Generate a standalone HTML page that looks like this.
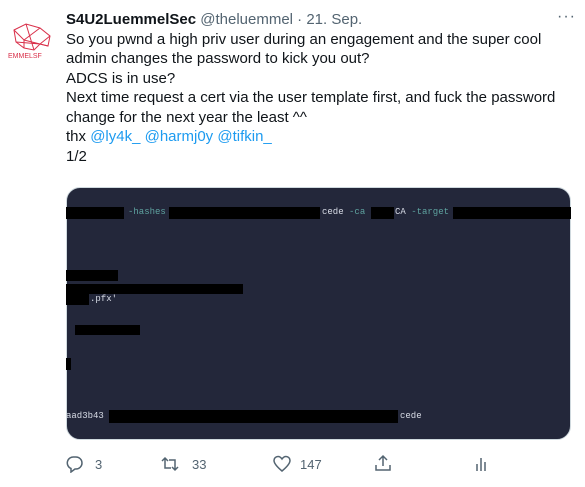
<!DOCTYPE html>
<html><head><style>
body{margin:0;width:585px;height:487px;background:#fff;font-family:"Liberation Sans",sans-serif;color:#0f1419;position:relative;overflow:hidden}
.a{position:absolute}
.t{font-size:15px;line-height:19.5px;left:66px;top:10px;width:510px}
.b{background:#000;position:absolute}
.m{font-family:"Liberation Mono",monospace;font-size:9px;position:absolute;color:#d8dce6}
.g{color:#5fa3a0}
.ic{position:absolute;top:457px;color:#536471;font-size:13px}
</style></head><body>
<svg class="a" style="left:6px;top:20px" width="50" height="42" viewBox="0 0 50 42">
<g fill="none" stroke="#d9304a" stroke-width="1">
<path d="M8 10 L20 4 L34 8 L44 16 L42 26 L34 24 L28 30 L18 28 L10 22 Z"/>
<path d="M8 10 L18 20 L34 8 M20 4 L28 30 M10 22 L34 24 L44 16 M18 28 L18 20 L42 26"/>
</g>
<text x="2" y="38" font-size="7" fill="#d9304a" font-family="Liberation Sans">EMMELSF</text>
</svg>
<div class="a t"><b>S4U2LuemmelSec</b> <span style="color:#536471">@theluemmel · 21. Sep.</span><br>
So you pwnd a high priv user during an engagement and the super cool admin changes the password to kick you out?<br>ADCS is in use?<br>Next time request a cert via the user template first, and fuck the password change for the next year the least ^^<br>thx <span style="color:#1d9bf0">@ly4k_ @harmj0y @tifkin_</span><br>1/2</div>
<div class="a" style="left:557px;top:8px;color:#536471;font-size:16px;letter-spacing:1px">···</div>
<div class="a" style="left:66px;top:187px;width:505px;height:253px;background:#23273a;border-radius:14px;overflow:hidden;border:1px solid #cfd9de;box-sizing:border-box"></div>
<div class="b" style="left:66px;top:207px;width:58px;height:12px"></div>
<div class="m g" style="left:128px;top:207px">-hashes</div>
<div class="b" style="left:169px;top:207px;width:151px;height:12px"></div>
<div class="m" style="left:322px;top:207px">cede <span class="g">-ca</span></div>
<div class="b" style="left:371px;top:207px;width:23px;height:12px"></div>
<div class="m" style="left:395px;top:207px">CA <span class="g">-target</span></div>
<div class="b" style="left:453px;top:207px;width:118px;height:12px"></div>
<div class="b" style="left:66px;top:270px;width:52px;height:11px"></div>
<div class="b" style="left:66px;top:284px;width:177px;height:10px"></div>
<div class="b" style="left:66px;top:294px;width:23px;height:11px"></div>
<div class="m" style="left:90px;top:294px">.pfx'</div>
<div class="b" style="left:75px;top:325px;width:65px;height:10px"></div>
<div class="b" style="left:66px;top:358px;width:5px;height:12px"></div>
<div class="m" style="left:66px;top:411px">aad3b43</div>
<div class="b" style="left:109px;top:410px;width:289px;height:13px"></div>
<div class="m" style="left:400px;top:411px">cede</div>
<svg class="a" style="left:66px;top:455px" width="18" height="18" viewBox="0 0 18 18" fill="none" stroke="#536471" stroke-width="1.5"><path d="M8 2h2a6 6 0 0 1 0 12H9l-4 3v-3.5A6 6 0 0 1 8 2z"/></svg>
<div class="ic" style="left:95px">3</div>
<svg class="a" style="left:160px;top:455px" width="20" height="18" viewBox="0 0 20 18" fill="none" stroke="#536471" stroke-width="1.5"><path d="M2 6l3-3 3 3M5 3v10h6M18 12l-3 3-3-3M15 15V5H9"/></svg>
<div class="ic" style="left:192px">33</div>
<svg class="a" style="left:272px;top:455px" width="20" height="18" viewBox="0 0 20 18" fill="none" stroke="#536471" stroke-width="1.5"><path d="M10 16C4 11 2 8 2 5.5 2 3 4 1.5 6 1.5c2 0 3.2 1.3 4 2.5.8-1.2 2-2.5 4-2.5 2 0 4 1.5 4 4C18 8 16 11 10 16z"/></svg>
<div class="ic" style="left:300px">147</div>
<svg class="a" style="left:374px;top:454px" width="18" height="18" viewBox="0 0 18 18" fill="none" stroke="#536471" stroke-width="1.5"><path d="M9 12V2M5 6l4-4 4 4M2 11v5h14v-5"/></svg>
<svg class="a" style="left:474px;top:456px" width="14" height="16" viewBox="0 0 14 16" fill="none" stroke="#536471" stroke-width="1.5"><path d="M3 8v7M7 2v13M11 6v9"/></svg>
</body></html>
